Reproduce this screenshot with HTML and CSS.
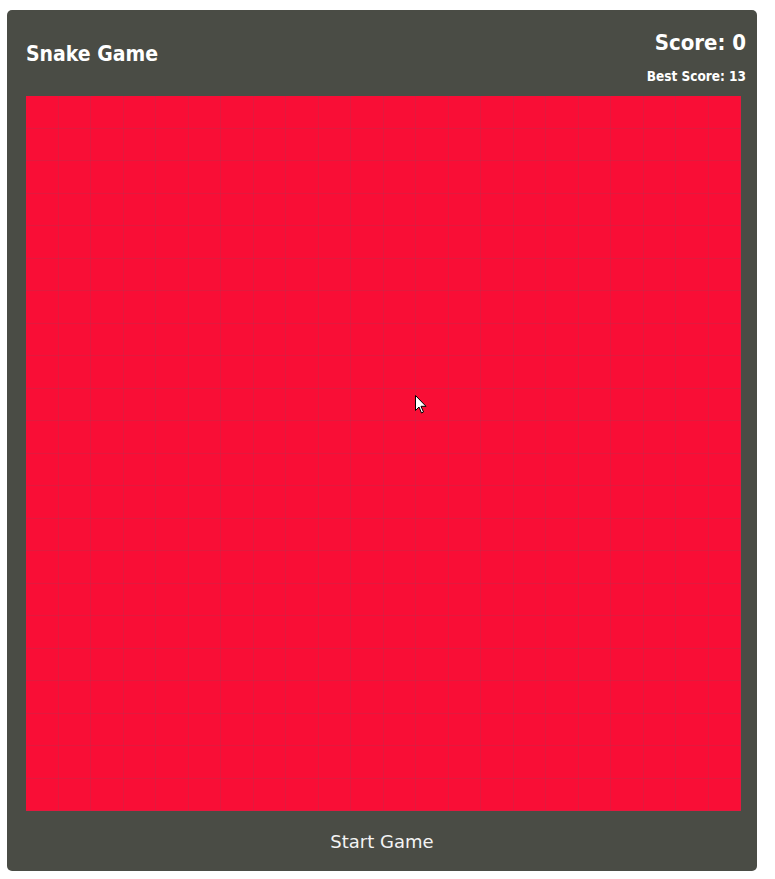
FILE: index.html
```html
<!DOCTYPE html>
<html lang="en">
<head>
<meta charset="utf-8">
<title>Snake Game</title>
<link rel="stylesheet" href="styles.css">
</head>
<body>
<div class="panel">
  <header class="header">
    <h1 class="title">Snake Game</h1>
    <div class="scores">
      <div class="score">Score: 0</div>
      <div class="best">Best Score: 13</div>
    </div>
  </header>
  <div class="board">
    <div class="cols">
      <i></i><i></i><i></i><i></i><i></i><i></i><i></i><i></i><i></i><i></i><i></i>
      <i></i><i></i><i></i><i></i><i></i><i></i><i></i><i></i><i></i><i></i><i></i>
    </div>
    <div class="rows">
      <i></i><i></i><i></i><i></i><i></i><i></i><i></i><i></i><i></i><i></i><i></i>
      <i></i><i></i><i></i><i></i><i></i><i></i><i></i><i></i><i></i><i></i><i></i>
    </div>
  </div>
  <div class="footer">
    <button class="start">Start Game</button>
  </div>
  <svg class="cursor" width="12" height="19" viewBox="0 0 12 19"><path d="M0.5 0.5 L0.5 15.5 L4 12 L6.5 18 L8.5 17 L6 11.3 L11 11.3 Z" fill="#fff" stroke="#000" stroke-width="1"/></svg>
</div>
</body>
</html>
```
FILE: styles.css
```css
html, body {
  margin: 0;
  padding: 0;
  background: #fff;
}
body {
  font-family: "DejaVu Sans Condensed", "DejaVu Sans", sans-serif;
}
.panel {
  position: relative;
  box-sizing: border-box;
  width: 750px;
  height: 861px;
  margin: 10px 0 0 7px;
  padding: 0 11px 0 19px;
  background: #4a4c45;
  border-radius: 5px;
  display: flex;
  flex-direction: column;
}
.header {
  height: 86px;
  display: flex;
  justify-content: space-between;
  align-items: flex-start;
  color: #fff;
}
.title {
  margin: 31px 0 0 0;
  font-size: 21px;
  font-weight: bold;
  line-height: 26px;
}
.scores {
  display: flex;
  flex-direction: column;
  align-items: flex-end;
  margin-top: 19px;
}
.score {
  font-size: 22px;
  font-weight: bold;
  line-height: 28px;
}
.best {
  margin-top: 11px;
  font-size: 13.5px;
  font-weight: bold;
  line-height: 17px;
}
.board {
  width: 715px;
  height: 715px;
  background-color: #f90e36;
  display: grid;
}
.cols, .rows {
  grid-area: 1 / 1;
  display: grid;
}
.cols {
  grid-template-columns: repeat(22, 1fr);
}
.rows {
  grid-template-rows: repeat(22, 1fr);
}
.cols i {
  border-right: 1px solid rgba(150, 70, 90, 0.22);
}
.rows i {
  border-bottom: 1px solid rgba(150, 70, 90, 0.22);
}
.footer {
  flex: 1;
  display: flex;
  justify-content: center;
  align-items: center;
}
.start {
  background: none;
  border: none;
  color: #f4f4f4;
  font-family: "DejaVu Sans", sans-serif;
  font-size: 18px;
  font-weight: normal;
  padding: 0;
  margin-left: -8px;
}
.cursor {
  position: absolute;
  left: 408px;
  top: 385px;
}
```
